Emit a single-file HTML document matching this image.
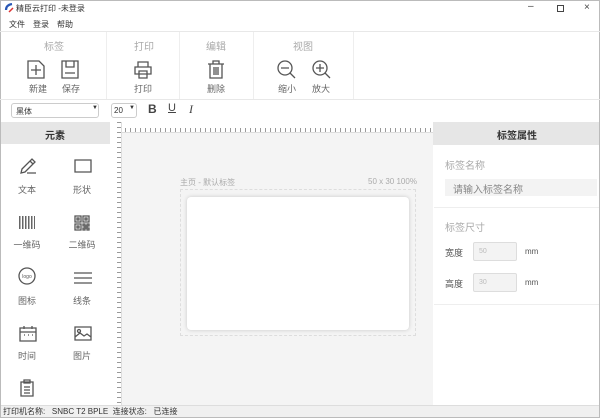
<!DOCTYPE html>
<html><head><meta charset="utf-8"><style>
*{margin:0;padding:0;box-sizing:border-box}
body{width:600px;height:418px;overflow:hidden;background:#fff;font-family:"Liberation Sans","Noto Sans CJK SC",sans-serif;position:relative;color:#333}
.a{position:absolute}
.t{font-size:9px;white-space:nowrap}
.g{color:#aaa}
svg{position:absolute;fill:none;stroke:#555;stroke-width:1.3}
.lbl{font-size:9px;color:#666;position:absolute;width:40px;text-align:center}
</style></head><body>
<div class="a" style="left:0;top:0;width:600px;height:418px;border:1px solid #bbb"></div>
<!-- title -->
<svg style="left:4px;top:3px" width="10" height="10" viewBox="0 0 10 10"><path d="M8 1 Q2 2 2 7" stroke="#2a57b5" stroke-width="2.2"/><path d="M5 9 L9 5" stroke="#d33" stroke-width="1.5"/></svg>
<div class="a t" style="left:16px;top:3px;font-size:8px">精臣云打印 -未登录</div>
<div class="a t" style="left:528px;top:1px;font-size:10px;color:#444">–</div>
<div class="a" style="left:557px;top:5px;width:7px;height:7px;border:1px solid #444"></div>
<div class="a t" style="left:584px;top:2px;font-size:10px;color:#444">×</div>
<div class="a t" style="left:9px;top:19px;font-size:8px">文件</div>
<div class="a t" style="left:33px;top:19px;font-size:8px">登录</div>
<div class="a t" style="left:57px;top:19px;font-size:8px">帮助</div>
<div class="a" style="left:0;top:31px;width:600px;height:1px;background:#e8e8e8"></div>
<!-- toolbar -->
<div class="a" style="left:106px;top:32px;width:1px;height:67px;background:#eee"></div>
<div class="a" style="left:179px;top:32px;width:1px;height:67px;background:#eee"></div>
<div class="a" style="left:253px;top:32px;width:1px;height:67px;background:#eee"></div>
<div class="a" style="left:353px;top:32px;width:1px;height:67px;background:#eee"></div>
<div class="a" style="left:0;top:99px;width:600px;height:1px;background:#e8e8e8"></div>
<div class="a t g" style="left:44px;top:38px;font-size:10px">标签</div>
<div class="a t g" style="left:134px;top:38px;font-size:10px">打印</div>
<div class="a t g" style="left:206px;top:38px;font-size:10px">编辑</div>
<div class="a t g" style="left:293px;top:38px;font-size:10px">视图</div>
<svg style="left:27px;top:60px" width="18" height="19" viewBox="0 0 18 19"><path d="M1 1H12L17 6V18H1Z M9 5V15 M4 10H14"/></svg>
<svg style="left:61px;top:60px" width="18" height="19" viewBox="0 0 18 19"><path d="M1 1H17V18H1Z M5 1V7H13V1 M4 13H14"/></svg>
<svg style="left:134px;top:61px" width="18" height="18" viewBox="0 0 18 18"><path d="M4 6V1H14V6 M1 6H17V13H1Z M5 10H13V17H5Z"/></svg>
<svg style="left:207px;top:60px" width="18" height="19" viewBox="0 0 18 19"><path d="M1 4H17 M6 4V1H12V4 M3 4V18H15V4 M7 7V15 M9 7V15 M11 7V15"/></svg>
<svg style="left:277px;top:60px" width="19" height="19" viewBox="0 0 19 19"><circle cx="8" cy="8" r="7"/><path d="M4 8H12 M13 13L18 18"/></svg>
<svg style="left:312px;top:60px" width="19" height="19" viewBox="0 0 19 19"><circle cx="8" cy="8" r="7"/><path d="M4 8H12 M8 4V12 M13 13L18 18"/></svg>
<div class="a t" style="left:29px;top:82px;color:#666">新建</div>
<div class="a t" style="left:62px;top:82px;color:#666">保存</div>
<div class="a t" style="left:134px;top:82px;color:#666">打印</div>
<div class="a t" style="left:207px;top:82px;color:#666">删除</div>
<div class="a t" style="left:278px;top:82px;color:#666">缩小</div>
<div class="a t" style="left:312px;top:82px;color:#666">放大</div>
<!-- font bar -->
<div class="a" style="left:11px;top:103px;width:88px;height:15px;border:1px solid #ccc;border-radius:3px"></div>
<div class="a t" style="left:16px;top:106px;font-size:8px">黑体</div>
<div class="a t" style="left:92px;top:105px;font-size:6px">▼</div>
<div class="a" style="left:111px;top:103px;width:26px;height:15px;border:1px solid #ccc;border-radius:3px"></div>
<div class="a t" style="left:114px;top:106px;font-size:8px">20</div>
<div class="a t" style="left:129px;top:105px;font-size:6px">▼</div>
<div class="a t" style="left:148px;top:102px;font-size:12px;font-weight:bold;color:#444">B</div>
<div class="a t" style="left:168px;top:102px;font-size:11px;text-decoration:underline;color:#444">U</div>
<div class="a t" style="left:189px;top:102px;font-size:12px;font-style:italic;font-family:'Liberation Serif',serif;color:#444">I</div>
<!-- left panel -->
<div class="a" style="left:1px;top:122px;width:109px;height:22px;background:#e6e6e6"></div>
<div class="a t" style="left:45px;top:127px;font-size:10px;font-weight:bold">元素</div>
<svg style="left:19px;top:157px" width="18" height="18" viewBox="0 0 18 18"><path d="M2 16L3 12L13 2L16 5L6 15Z M11 4L14 7 M8 16H17"/></svg>
<svg style="left:74px;top:159px" width="18" height="14" viewBox="0 0 18 14"><path d="M1 1H17V13H1Z"/></svg>
<div class="a" style="left:19px;top:216px;width:16px;height:13px;background:repeating-linear-gradient(90deg,#666 0 1.5px,#fff 1.5px 3px)"></div>
<svg style="left:74px;top:215px" width="16" height="16" viewBox="0 0 16 16" style="stroke-width:1"><path d="M1 1H7V7H1Z M9 1H15V7H9Z M1 9H7V15H1Z M3 3H5V5H3Z M11 3H13V5H11Z M3 11H5V13H3Z M9 9H11V11H9Z M13 9H15V11H13Z M11 11H13V13H11Z M9 13H11V15H9Z M13 13H15V15H13Z"/></svg>
<svg style="left:18px;top:267px" width="18" height="18" viewBox="0 0 18 18"><circle cx="9" cy="9" r="8"/><text x="9" y="11" font-size="5" text-anchor="middle" fill="#555" stroke="none">logo</text></svg>
<svg style="left:74px;top:272px" width="18" height="12" viewBox="0 0 18 12"><path d="M0 1H18 M0 6H18 M0 11H18"/></svg>
<svg style="left:19px;top:326px" width="18" height="16" viewBox="0 0 18 16"><path d="M1 2H17V15H1Z M1 6H17 M5 0V3 M13 0V3 M5 9H6 M9 9H10 M13 9H14"/></svg>
<svg style="left:74px;top:326px" width="18" height="15" viewBox="0 0 18 15"><path d="M1 1H17V14H1Z M1 11L6 7L10 10L13 8L17 11"/><circle cx="5" cy="5" r="1.5"/></svg>
<svg style="left:20px;top:379px" width="14" height="18" viewBox="0 0 14 18"><path d="M1 3H13V17H1Z M4 1H10V4H4Z M4 8H10 M4 11H10 M4 14H10"/></svg>
<div class="lbl" style="left:7px;top:183px">文本</div>
<div class="lbl" style="left:62px;top:183px">形状</div>
<div class="lbl" style="left:7px;top:238px">一维码</div>
<div class="lbl" style="left:62px;top:238px">二维码</div>
<div class="lbl" style="left:7px;top:294px">图标</div>
<div class="lbl" style="left:62px;top:294px">线条</div>
<div class="lbl" style="left:7px;top:349px">时间</div>
<div class="lbl" style="left:62px;top:349px">图片</div>
<!-- canvas -->
<div class="a" style="left:110px;top:122px;width:323px;height:283px;background:#f4f4f4"></div>
<div class="a" style="left:110px;top:122px;width:323px;height:11px;background:#fff;border-bottom:1px solid #ddd;background-image:repeating-linear-gradient(90deg,#999 0 1px,transparent 1px 5px);background-size:100% 4px;background-repeat:no-repeat;background-position:0 6px"></div>
<div class="a" style="left:110px;top:122px;width:12px;height:283px;background:#fff;border-right:1px solid #ddd;background-image:repeating-linear-gradient(180deg,#999 0 1px,transparent 1px 5px);background-size:4px 100%;background-repeat:no-repeat;background-position:7px 0"></div>
<div class="a t g" style="left:180px;top:177px;font-size:8px">主页 - 默认标签</div>
<div class="a t g" style="left:368px;top:177px;font-size:8px">50 x 30 100%</div>
<div class="a" style="left:180px;top:189px;width:236px;height:147px;border:1px dashed #ddd"></div>
<div class="a" style="left:187px;top:197px;width:222px;height:133px;background:#fff;border-radius:4px;box-shadow:0 0 4px rgba(0,0,0,.18)"></div>
<!-- right panel -->
<div class="a" style="left:433px;top:122px;width:166px;height:23px;background:#e6e6e6"></div>
<div class="a t" style="left:497px;top:127px;font-size:10px;font-weight:bold">标签属性</div>
<div class="a t g" style="left:445px;top:157px;font-size:10px">标签名称</div>
<div class="a" style="left:445px;top:179px;width:152px;height:17px;background:#f3f3f3"></div>
<div class="a t" style="left:453px;top:181px;font-size:10px;color:#888">请输入标签名称</div>
<div class="a" style="left:434px;top:207px;width:165px;height:1px;background:#eee"></div>
<div class="a t g" style="left:445px;top:219px;font-size:10px">标签尺寸</div>
<div class="a t" style="left:445px;top:246px;color:#555">宽度</div>
<div class="a" style="left:473px;top:242px;width:44px;height:19px;background:#f3f3f3;border:1px solid #ddd;border-radius:2px"></div>
<div class="a t" style="left:479px;top:248px;font-size:7px;color:#bbb">50</div>
<div class="a t" style="left:525px;top:247px;font-size:8px;color:#555">mm</div>
<div class="a t" style="left:445px;top:277px;color:#555">高度</div>
<div class="a" style="left:473px;top:273px;width:44px;height:19px;background:#f3f3f3;border:1px solid #ddd;border-radius:2px"></div>
<div class="a t" style="left:479px;top:279px;font-size:7px;color:#bbb">30</div>
<div class="a t" style="left:525px;top:278px;font-size:8px;color:#555">mm</div>
<div class="a" style="left:434px;top:304px;width:165px;height:1px;background:#eee"></div>
<!-- status -->
<div class="a" style="left:1px;top:405px;width:598px;height:12px;background:#f0f0f0;border-top:1px solid #ddd"></div>
<div class="a t" style="left:3px;top:406px;font-size:8px">打印机名称:&nbsp;&nbsp; SNBC T2 BPLE&nbsp; 连接状态:&nbsp;&nbsp; 已连接</div>
</body></html>
